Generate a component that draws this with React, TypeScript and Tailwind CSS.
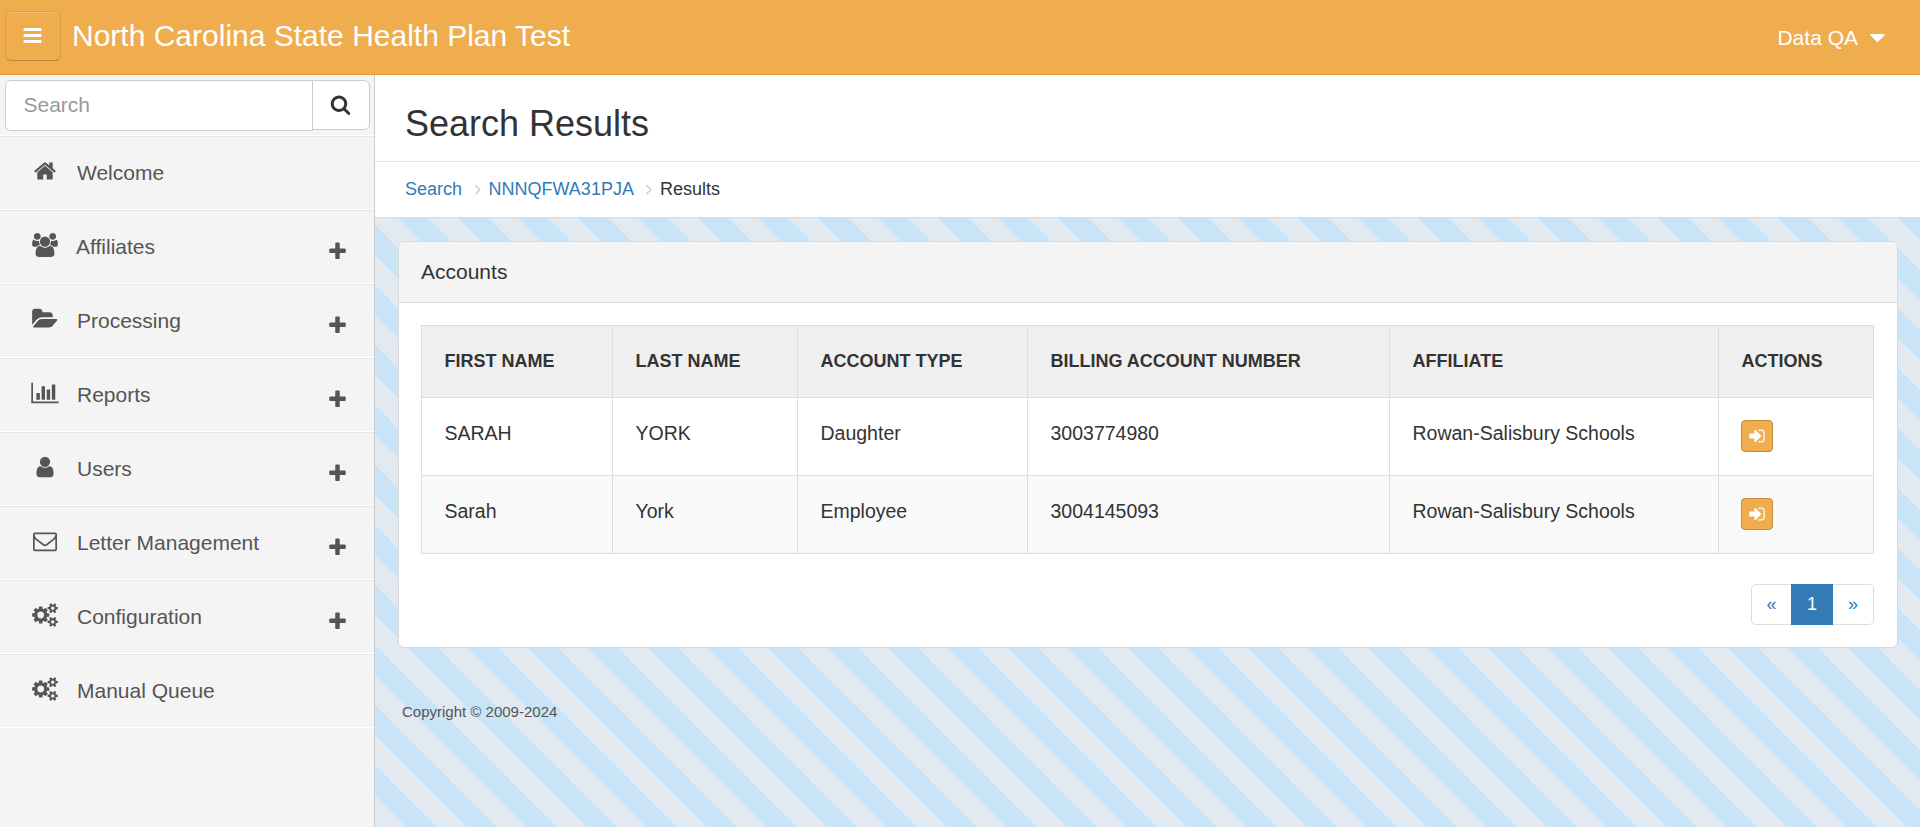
import React from "react";

const ICONS = {
  bars: "M1664 1344v128q0 26-19 45t-45 19h-1408q-26 0-45-19t-19-45v-128q0-26 19-45t45-19h1408q26 0 45 19t19 45zm0-512v128q0 26-19 45t-45 19h-1408q-26 0-45-19t-19-45v-128q0-26 19-45t45-19h1408q26 0 45 19t19 45zm0-512v128q0 26-19 45t-45 19h-1408q-26 0-45-19t-19-45v-128q0-26 19-45t45-19h1408q26 0 45 19t19 45z",
  search:
    "M1216 832q0-185-131.5-316.5t-316.5-131.5-316.5 131.5-131.5 316.5 131.5 316.5 316.5 131.5 316.5-131.5 131.5-316.5zm512 832q0 52-38 90t-90 38q-54 0-90-38l-343-342q-179 124-399 124-143 0-273.5-55.5t-225-150-150-225-55.5-273.5 55.5-273.5 150-225 225-150 273.5-55.5 273.5 55.5 225 150 150 225 55.5 273.5q0 220-124 399l343 343q37 37 37 90z",
  home: "M1472 992v480q0 26-19 45t-45 19h-384v-384h-256v384h-384q-26 0-45-19t-19-45v-480q0-1 .5-3t.5-3l575-474 575 474q1 2 1 6zm223-69l-62 74q-8 9-21 11h-3q-13 0-21-7l-692-577-692 577q-12 8-24 7-13-2-21-11l-62-74q-8-10-7-23.5t11-21.5l719-599q32-26 76-26t76 26l244 204v-195q0-14 9-23t23-9h192q14 0 23 9t9 23v408l219 182q10 8 11 21.5t-7 23.5z",
  users:
    "M529 896q-162 5-265 128h-134q-82 0-138-40.5t-56-118.5q0-353 124-353 6 0 43.5 21t97.5 42.5 119 21.5q67 0 133-23-5 37-5 66 0 139 81 256zm1071 637q0 120-73 189.5t-194 69.5h-874q-121 0-194-69.5t-73-189.5q0-53 3.5-103.5t14-109 26.5-108.5 43-97.5 62-81 85.5-53.5 111.5-20q10 0 43 21.5t73 48 107 48 135 21.5 135-21.5 107-48 73-48 43-21.5q61 0 111.5 20t85.5 53.5 62 81 43 97.5 26.5 108.5 14 109 3.5 103.5zm-1024-1277q0 106-75 181t-181 75-181-75-75-181 75-181 181-75 181 75 75 181zm704 384q0 159-112.5 271.5t-271.5 112.5-271.5-112.5-112.5-271.5 112.5-271.5 271.5-112.5 271.5 112.5 112.5 271.5zm576 225q0 78-56 118.5t-138 40.5h-134q-103-123-265-128 81-117 81-256 0-29-5-66 66 23 133 23 59 0 119-21.5t97.5-42.5 43.5-21q124 0 124 353zm-128-609q0 106-75 181t-181 75-181-75-75-181 75-181 181-75 181 75 75 181z",
  folder:
    "M1815 952q0 31-31 66l-336 396q-43 51-120.5 86.5t-143.5 35.5h-1088q-34 0-60.5-13t-26.5-43q0-31 31-66l336-396q43-51 120.5-86.5t143.5-35.5h1088q34 0 60.5 13t26.5 43zm-343-344v160h-832q-94 0-197 47.5t-164 119.5l-337 396-5 6q0-4-.5-12.5t-.5-12.5v-960q0-92 66-158t158-66h320q92 0 158 66t66 158v32h544q92 0 158 66t66 158z",
  chart:
    "M512 896v512h-256v-512h256zm384-512v1024h-256v-1024h256zm1024 1152v128h-2048v-1536h128v1408h1920zm-640-896v768h-256v-768h256zm384-384v1152h-256v-1152h256z",
  user: "M1536 1399q0 109-62.5 187t-150.5 78h-854q-88 0-150.5-78t-62.5-187q0-85 8.5-160.5t31.5-152 58.5-131 94-89 134.5-34.5q131 128 313 128t313-128q76 0 134.5 34.5t94 89 58.5 131 31.5 152 8.5 160.5zm-256-887q0 159-112.5 271.5t-271.5 112.5-271.5-112.5-112.5-271.5 112.5-271.5 271.5-112.5 271.5 112.5 112.5 271.5z",
  envelope:
    "M1664 1504v-768q-32 36-69 66-268 206-426 338-51 43-83 67t-86.5 48.5-102.5 24.5h-2q-48 0-102.5-24.5t-86.5-48.5-83-67q-158-132-426-338-37-30-69-66v768q0 13 9.5 22.5t22.5 9.5h1472q13 0 22.5-9.5t9.5-22.5zm0-1051v-24.5l-.5-13-3-12.5-5.5-9-9-7.5-14-2.5h-1472q-13 0-22.5 9.5t-9.5 22.5q0 168 147 284 193 152 401 317 6 5 35 29.5t46 37.5 44.5 31.5 50.5 27.5 43 9h2q20 0 43-9t50.5-27.5 44.5-31.5 46-37.5 35-29.5q208-165 401-317 54-43 100.5-115.5t46.5-131.5zm128-37v1088q0 66-47 113t-113 47h-1472q-66 0-113-47t-47-113v-1088q0-66 47-113t113-47h1472q66 0 113 47t47 113z",
  cogs: "M832 896q0-106-75-181t-181-75-181 75-75 181 75 181 181 75 181-75 75-181zm768 512q0-52-38-90t-90-38-90 38-38 90q0 53 37.5 90.5t90.5 37.5 90.5-37.5 37.5-90.5zm0-1024q0-52-38-90t-90-38-90 38-38 90q0 53 37.5 90.5t90.5 37.5 90.5-37.5 37.5-90.5zm-384 421v185q0 10-7 19.5t-16 10.5l-155 24q-11 35-32 76 34 48 90 115 7 11 7 20 0 12-7 19-23 30-82.5 89.5t-78.5 59.5q-11 0-21-7l-115-90q-37 19-77 31-11 108-23 155-7 24-30 24h-186q-11 0-20-7.5t-10-17.5l-23-153q-34-10-75-31l-118 89q-7 7-20 7-11 0-21-8-144-133-144-160 0-9 7-19 10-14 41-53t47-61q-23-44-35-82l-152-24q-10-1-17-9.5t-7-19.5v-185q0-10 7-19.5t16-10.5l155-24q11-35 32-76-34-48-90-115-7-11-7-20 0-12 7-20 22-30 82-89t79-59q11 0 21 7l115 90q34-18 77-32 11-108 23-154 7-24 30-24h186q11 0 20 7.5t10 17.5l23 153q34 10 75 31l118-89q8-7 20-7 11 0 21 8 144 133 144 160 0 8-7 19-12 16-42 54t-45 60q23 48 34 82l152 23q10 2 17 10.5t7 19.5zm640 533v140q0 16-149 31-12 27-30 52 51 113 51 138 0 4-4 7-122 71-124 71-8 0-46-47t-52-68q-20 2-30 2t-30-2q-14 21-52 68t-46 47q-2 0-124-71-4-3-4-7 0-25 51-138-18-25-30-52-149-15-149-31v-140q0-16 149-31 13-29 30-52-51-113-51-138 0-4 4-7 4-2 35-20t59-34 30-16q8 0 46 46.5t52 67.5q20-2 30-2t30 2q51-71 92-112l6-2q4 0 124 70 4 3 4 7 0 25-51 138 17 23 30 52 149 15 149 31zm0-1024v140q0 16-149 31-12 27-30 52 51 113 51 138 0 4-4 7-122 71-124 71-8 0-46-47t-52-68q-20 2-30 2t-30-2q-14 21-52 68t-46 47q-2 0-124-71-4-3-4-7 0-25 51-138-18-25-30-52-149-15-149-31v-140q0-16 149-31 13-29 30-52-51-113-51-138 0-4 4-7 4-2 35-20t59-34 30-16q8 0 46 46.5t52 67.5q20-2 30-2t30 2q51-71 92-112l6-2q4 0 124 70 4 3 4 7 0 25-51 138 17 23 30 52 149 15 149 31z",
  plus: "M1600 736v192q0 40-28 68t-68 28h-416v416q0 40-28 68t-68 28h-192q-40 0-68-28t-28-68v-416h-416q-40 0-68-28t-28-68v-192q0-40 28-68t68-28h416v-416q0-40 28-68t68-28h192q40 0 68 28t28 68v416h416q40 0 68 28t28 68z",
  signIn:
    "M1312 896q0 26-19 45l-544 544q-19 19-45 19t-45-19-19-45v-288h-448q-26 0-45-19t-19-45v-384q0-26 19-45t45-19h448v-288q0-26 19-45t45-19 45 19l544 544q19 19 19 45zm352-352v704q0 119-84.5 203.5t-203.5 84.5h-320q-13 0-22.5-9.5t-9.5-22.5q0-4-1-20t-.5-26.5 3-23.5 10-19.5 20.5-6.5h320q66 0 113-47t47-113v-704q0-66-47-113t-113-47h-312l-11.5-1-11.5-3-8-5.5-7-9-2-13.5q0-4-1-20t-.5-26.5 3-23.5 10-19.5 20.5-6.5h320q119 0 203.5 84.5t84.5 203.5z",
  caret:
    "M1408 704q0 26-19 45l-448 448q-19 19-45 19t-45-19l-448-448q-19-19-19-45t19-45 45-19h896q26 0 45 19t19 45z",
  angle:
    "M1171 960q0 13-10 23l-466 466q-10 10-23 10t-23-10l-50-50q-10-10-10-23t10-23l393-393-393-393q-10-10-10-23t10-23l50-50q10-10 23-10t23 10l466 466q10 10 10 23z",
};

type IconName = keyof typeof ICONS;

function Icon({ name, className }: { name: IconName; className: string }) {
  return (
    <svg viewBox="0 0 1792 1792" fill="currentColor" className={`shrink-0 overflow-visible ${className}`} aria-hidden="true">
      <path d={ICONS[name]} />
    </svg>
  );
}

const MENU: { label: string; icon: IconName; expandable: boolean; gap: string }[] = [
  { label: "Welcome", icon: "home", expandable: false, gap: "ml-5" },
  { label: "Affiliates", icon: "users", expandable: true, gap: "ml-[19px]" },
  { label: "Processing", icon: "folder", expandable: true, gap: "ml-5" },
  { label: "Reports", icon: "chart", expandable: true, gap: "ml-5" },
  { label: "Users", icon: "user", expandable: true, gap: "ml-5" },
  { label: "Letter Management", icon: "envelope", expandable: true, gap: "ml-5" },
  { label: "Configuration", icon: "cogs", expandable: true, gap: "ml-5" },
  { label: "Manual Queue", icon: "cogs", expandable: false, gap: "ml-5" },
];

const COLUMNS = ["FIRST NAME", "LAST NAME", "ACCOUNT TYPE", "BILLING ACCOUNT NUMBER", "AFFILIATE", "ACTIONS"];

const ROWS = [
  ["SARAH", "YORK", "Daughter", "3003774980", "Rowan-Salisbury Schools"],
  ["Sarah", "York", "Employee", "3004145093", "Rowan-Salisbury Schools"],
];

function Header() {
  return (
    <header className="flex h-[75px] shrink-0 items-start justify-between border-b border-[#d89c46] bg-[#f0ad4e] text-white">
      <div className="flex items-start">
        <button className="mt-[11px] ml-[5px] flex h-[50px] w-14 items-center justify-center rounded-[6px] border border-[#d89c46] border-b-[#b8843a] pr-px pb-px shadow-[inset_0_1px_0_rgba(255,255,255,0.2)]">
          <Icon name="bars" className="size-[21px]" />
        </button>
        <h1 className="ml-[11px] text-[30px] leading-[71px]">North Carolina State Health Plan Test</h1>
      </div>
      <div className="flex h-[75px] items-center pr-[30px] text-[21px]">
        <span className="leading-[75px]">Data QA</span>
        <Icon name="caret" className="ml-[7px] size-[25px]" />
      </div>
    </header>
  );
}

function Sidebar() {
  return (
    <aside className="w-[375px] shrink-0 border-r border-[#ccc] bg-[#f4f4f4] text-[#555]">
      <div className="flex h-[61px] items-start border-b border-white pt-[5px] pl-[5px]">
        <input
          placeholder="Search"
          className="h-[51px] w-[308px] rounded-l-[6px] border border-[#ccc] bg-white pb-[2px] pl-[17.5px] text-[21px] outline-none placeholder:text-[#999] placeholder:opacity-100"
        />
        <button className="-ml-px flex h-[50px] w-[58px] items-center justify-center rounded-r-[6px] border border-[#ccc] bg-white pr-[2px] pb-px text-[#333]">
          <Icon name="search" className="size-[21px]" />
        </button>
      </div>
      <nav>
        {MENU.map((item) => (
          <a key={item.label} className="flex h-[74px] items-start border-t border-b border-t-[#e7e7e7] border-b-white pr-[26px] pl-[33px]">
            <Icon name={item.icon} className="mt-[22px] size-6" />
            <span className={`grow text-[21px] leading-[72px] ${item.gap}`}>{item.label}</span>
            {item.expandable && <Icon name="plus" className="mt-[30px] size-[21px]" />}
          </a>
        ))}
      </nav>
    </aside>
  );
}

function Breadcrumb() {
  return (
    <div className="flex h-14 items-start border-b border-[#ddd] bg-white pl-[30px] text-[18px] leading-[54px] text-[#337ab7]">
      <a>Search</a>
      <Icon name="angle" className="mt-[18px] ml-[6.5px] size-[18px] text-[#ccc]" />
      <a className="ml-[2px]">NNNQFWA31PJA</a>
      <Icon name="angle" className="mt-[18px] ml-[6.5px] size-[18px] text-[#ccc]" />
      <span className="ml-[1.5px] text-[#333]">Results</span>
    </div>
  );
}

function AccountsTable() {
  return (
    <div className="grid grid-cols-[191px_185px_230px_362px_329px_155px] grid-rows-[72px_78px_78px] border-t border-l border-[#ddd]">
      {COLUMNS.map((c) => (
        <div key={c} className="border-r border-b border-[#ddd] bg-[#efefef] pl-[22.5px] text-[18px] leading-[70px] font-bold">
          {c}
        </div>
      ))}
      {ROWS.map((row, r) => {
        const bg = r % 2 === 1 ? "bg-[#f9f9f9]" : "bg-white";
        return (
          <React.Fragment key={r}>
            {row.map((value, i) => (
              <div key={i} className={`border-r border-b border-[#ddd] pl-[22.5px] text-[19.5px] leading-[70px] ${bg}`}>
                {value}
              </div>
            ))}
            <div className={`border-r border-b border-[#ddd] pt-[22px] pl-[22px] ${bg}`}>
              <button className="flex size-8 items-center justify-center rounded-[4px] border border-[#c58c3c] bg-[#f0ad4e] text-white">
                <Icon name="signIn" className="size-[18px]" />
              </button>
            </div>
          </React.Fragment>
        );
      })}
    </div>
  );
}

function Pagination() {
  return (
    <div className="mt-[30px] flex h-[41px] justify-end text-center text-[18px] leading-[38px] text-[#337ab7]">
      <a className="w-10 rounded-l-[5px] border border-r-0 border-[#ddd]">«</a>
      <a className="w-[42px] border border-[#337ab7] bg-[#337ab7] text-white">1</a>
      <a className="w-[41px] rounded-r-[5px] border border-l-0 border-[#ddd]">»</a>
    </div>
  );
}

export default function App() {
  return (
    <div className="flex h-[827px] w-[1920px] flex-col overflow-hidden bg-[#c9e4f7] bg-[linear-gradient(45deg,transparent_25%,#e2e9f0_25%,#e2e9f0_50%,transparent_50%,transparent_75%,#e2e9f0_75%)] bg-[length:60px_60px] font-['Liberation_Sans',Arial,sans-serif] text-[#333]">
      <Header />
      <div className="flex min-h-0 grow">
        <Sidebar />
        <main className="grow">
          <div className="h-[87px] border-b border-[#e1e1e1] bg-white pt-[11px] pl-[30px]">
            <h2 className="text-[36px] leading-[75px]">Search Results</h2>
          </div>
          <Breadcrumb />
          <section className="mt-[23px] ml-[23px] h-[407px] w-[1500px] overflow-hidden rounded-[6px] border border-[#d9d9d9] bg-white">
            <div className="h-[61px] border-b border-[#ddd] bg-[#f4f4f4] pl-[22px] text-[21px] leading-[60px]">Accounts</div>
            <div className="pt-[22px] pr-[23px] pl-[22px]">
              <AccountsTable />
              <Pagination />
            </div>
          </section>
          <footer className="mt-[54px] ml-[27px] text-[15px] leading-5 text-[#555]">Copyright © 2009-2024</footer>
        </main>
      </div>
    </div>
  );
}
